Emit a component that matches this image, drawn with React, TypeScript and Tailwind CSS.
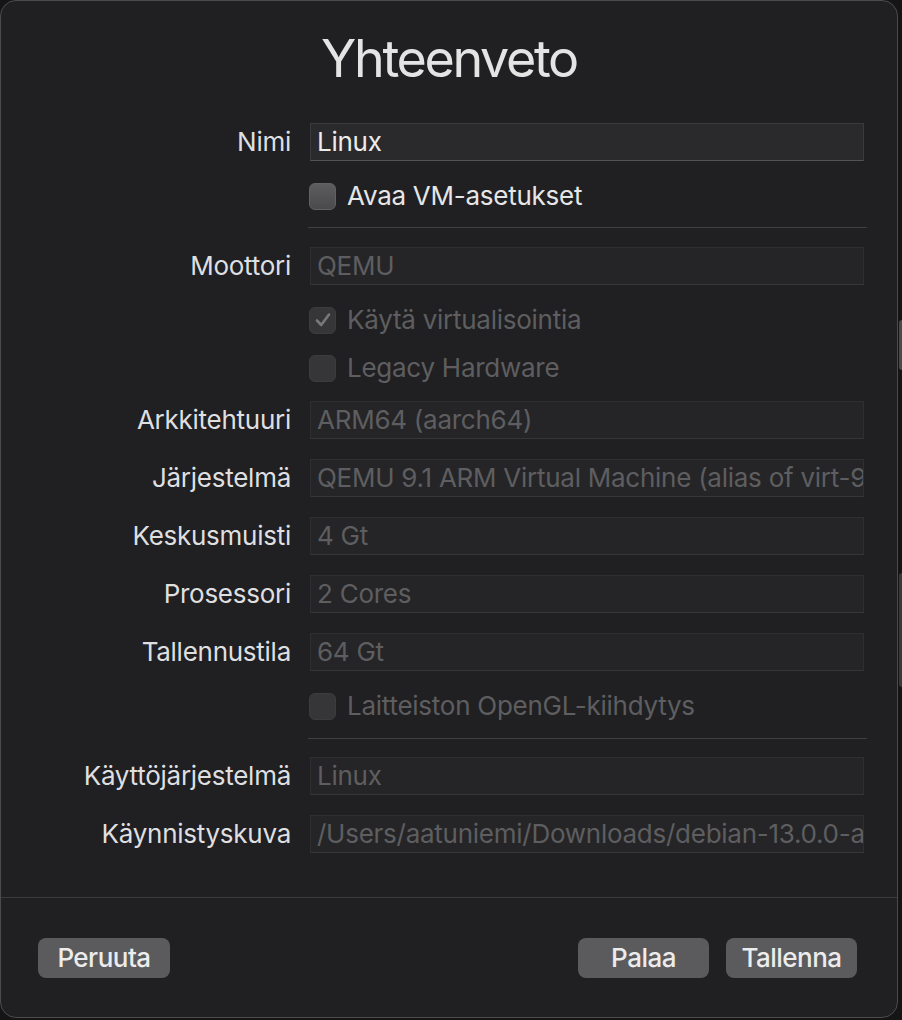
import React from 'react';

interface FieldProps {
  label: string;
  value: string;
  enabled?: boolean;
}

function Field({ label, value, enabled }: FieldProps) {
  return (
    <div className="flex items-center h-[38px]">
      <div className="w-[290px] text-right text-[26px] leading-none tracking-[-0.01em] text-[#dfdfe0]">{label}</div>
      <div
        className={
          enabled
            ? 'ml-[19px] w-[554px] h-[38px] flex items-center px-[6px] overflow-hidden whitespace-nowrap bg-[#2a2a2c] border border-[#3a3a3c] border-b-[#535355] text-[26px] leading-none tracking-[-0.01em] text-[#ececec]'
            : 'ml-[19px] w-[554px] h-[38px] flex items-center px-[6px] overflow-hidden whitespace-nowrap bg-[#252527] border border-[#2f2f31] border-b-[#363638] text-[26px] leading-none tracking-[-0.01em] text-[#5e5e60]'
        }
      >
        {value}
      </div>
    </div>
  );
}

interface CheckProps {
  label: string;
  checked?: boolean;
  enabled?: boolean;
}

function Check({ label, checked, enabled }: CheckProps) {
  return (
    <div className="flex items-center h-[28px] pl-[308px]">
      <div
        className={
          enabled
            ? 'w-[27px] h-[27px] rounded-[6px] bg-gradient-to-b from-[#5d5d5f] to-[#4a4a4c] border border-[#626264]'
            : 'w-[27px] h-[27px] rounded-[6px] bg-[#363638] border border-[#3c3c3e] flex items-center justify-center'
        }
      >
        {checked && (
          <svg width="20" height="20" viewBox="0 0 20 20" fill="none">
            <path d="M4 10.5 L8.2 15 L16 4.5" stroke="#78787a" strokeWidth="2.6" strokeLinecap="round" strokeLinejoin="round" />
          </svg>
        )}
      </div>
      <span
        className={
          enabled
            ? 'ml-[11px] text-[26px] leading-none tracking-[-0.01em] text-[#e6e6e7]'
            : 'ml-[11px] text-[26px] leading-none tracking-[-0.01em] text-[#5e5e60]'
        }
      >
        {label}
      </span>
    </div>
  );
}

function Separator() {
  return <div className="ml-[307px] w-[559px] h-px bg-[#3f3f41]" />;
}

export default function App() {
  return (
    <div className="w-[902px] h-[1020px] flex bg-[#151516] font-['Inter',sans-serif] overflow-hidden">
      <div className="w-[898px] h-[1018px] shrink-0 flex flex-col rounded-[16px] border border-[#4b4b4d] bg-[#202022]">
        {/* Title */}
        <div className="pt-[32px] text-center text-[52px] leading-none tracking-[-0.045em] text-[#e4e4e5]">Yhteenveto</div>

        {/* Form */}
        <div className="flex-1 flex flex-col mt-[38px]">
          <Field label="Nimi" value="Linux" enabled />
          <div className="mt-[21px]">
            <Check label="Avaa VM-asetukset" enabled />
          </div>
          <div className="mt-[17px]">
            <Separator />
          </div>
          <div className="mt-[19px]">
            <Field label="Moottori" value="QEMU" />
          </div>
          <div className="mt-[21px]">
            <Check label="Käytä virtualisointia" checked />
          </div>
          <div className="mt-[20px]">
            <Check label="Legacy Hardware" />
          </div>
          <div className="mt-[19px] flex flex-col gap-[20px]">
            <Field label="Arkkitehtuuri" value="ARM64 (aarch64)" />
            <Field label="Järjestelmä" value="QEMU 9.1 ARM Virtual Machine (alias of virt-9.1)" />
            <Field label="Keskusmuisti" value="4 Gt" />
            <Field label="Prosessori" value="2 Cores" />
            <Field label="Tallennustila" value="64 Gt" />
          </div>
          <div className="mt-[21px]">
            <Check label="Laitteiston OpenGL-kiihdytys" />
          </div>
          <div className="mt-[18px]">
            <Separator />
          </div>
          <div className="mt-[18px] flex flex-col gap-[20px]">
            <Field label="Käyttöjärjestelmä" value="Linux" />
            <Field label="Käynnistyskuva" value="/Users/aatuniemi/Downloads/debian-13.0.0-arm64-netinst.iso" />
          </div>
        </div>

        {/* Footer */}
        <div className="border-t border-[#3a3a3c] pt-[40px] pb-[39px] pl-[37px] pr-[40px] flex items-center">
          <button className="w-[132px] h-[40px] rounded-[8px] bg-[#5b5b5d] text-[26px] leading-none tracking-[-0.02em] font-medium text-[#ececec]">
            Peruuta
          </button>
          <div className="flex-1" />
          <button className="w-[131px] h-[40px] rounded-[8px] bg-[#5b5b5d] text-[26px] leading-none tracking-[-0.02em] font-medium text-[#ececec]">
            Palaa
          </button>
          <button className="ml-[17px] w-[131px] h-[40px] rounded-[8px] bg-[#5b5b5d] text-[26px] leading-none tracking-[-0.02em] font-medium text-[#ececec]">
            Tallenna
          </button>
        </div>
      </div>

      {/* Sliver of the window behind */}
      <div className="flex-1 flex flex-col">
        <div className="mt-[320px] h-[50px] ml-[1px] bg-[#4a4a4c] rounded-l-full" />
        <div className="mt-[203px] h-[114px] ml-[1px] bg-[#3a3a3c] rounded-l-full" />
      </div>
    </div>
  );
}
